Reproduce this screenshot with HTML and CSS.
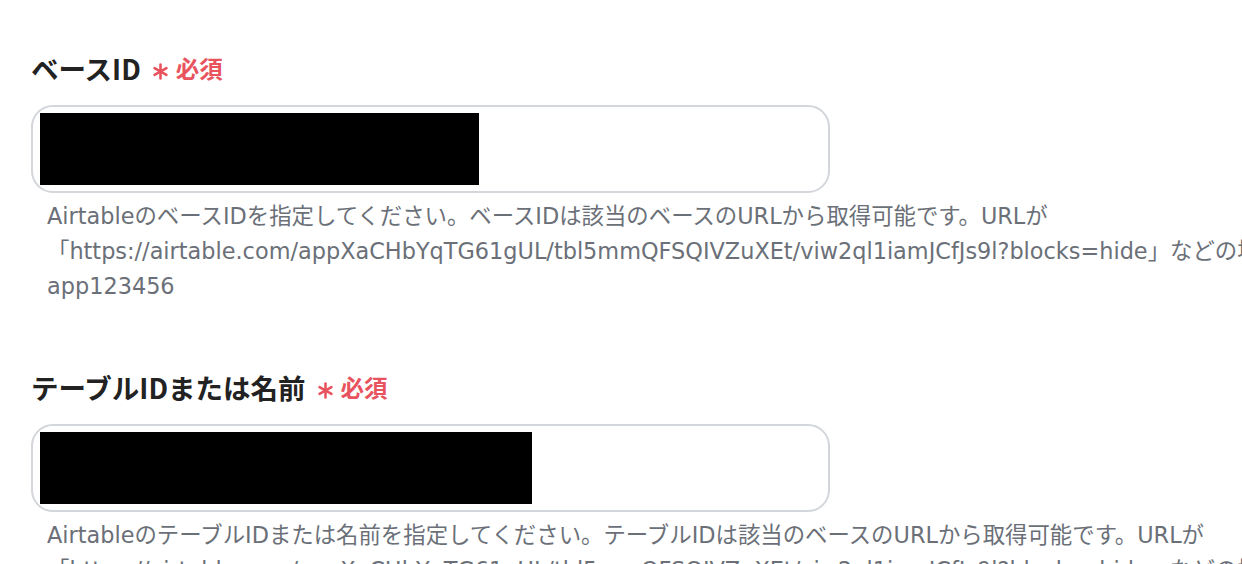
FILE: index.html
```html
<!DOCTYPE html>
<html lang="ja">
<head>
<meta charset="utf-8">
<title>Airtable 設定</title>
<link rel="stylesheet" href="styles.css">
</head>
<body>
<div class="form">
  <section class="field">
    <div class="label">
      <span class="label-text">ベースID</span>
      <svg class="req-mark" viewBox="0 0 16 16" width="17" height="17" aria-hidden="true"><g stroke="currentColor" stroke-width="2.4" stroke-linecap="round"><line x1="8" y1="1.5" x2="8" y2="14.5"/><line x1="2.4" y1="4.75" x2="13.6" y2="11.25"/><line x1="2.4" y1="11.25" x2="13.6" y2="4.75"/></g></svg>
      <span class="req-text">必須</span>
    </div>
    <div class="input"><div class="redact redact-1"></div></div>
    <p class="help">AirtableのベースIDを指定してください。ベースIDは該当のベースのURLから取得可能です。URLが<br>「https://airtable.com/appXaCHbYqTG61gUL/tbl5mmQFSQIVZuXEt/viw2ql1iamJCfJs9l?blocks=hide」などの場合、ベースIDは<br>app123456</p>
  </section>
  <section class="field">
    <div class="label">
      <span class="label-text">テーブルIDまたは名前</span>
      <svg class="req-mark" viewBox="0 0 16 16" width="17" height="17" aria-hidden="true"><g stroke="currentColor" stroke-width="2.4" stroke-linecap="round"><line x1="8" y1="1.5" x2="8" y2="14.5"/><line x1="2.4" y1="4.75" x2="13.6" y2="11.25"/><line x1="2.4" y1="11.25" x2="13.6" y2="4.75"/></g></svg>
      <span class="req-text">必須</span>
    </div>
    <div class="input"><div class="redact redact-2"></div></div>
    <p class="help">AirtableのテーブルIDまたは名前を指定してください。テーブルIDは該当のベースのURLから取得可能です。URLが<br>「https://airtable.com/appXaCHbYqTG61gUL/tbl5mmQFSQIVZuXEt/viw2ql1iamJCfJs9l?blocks=hide」などの場合、テーブルIDは<br>tbl5mmQFSQIVZuXEt</p>
  </section>
</div>
</body>
</html>
```
FILE: styles.css
```css
html, body {
  margin: 0;
  padding: 0;
  background: #ffffff;
  overflow: hidden;
}

body {
  font-family: "DejaVu Sans", "Noto Sans CJK JP", sans-serif;
  color: #222222;
}

.form {
  padding: 49px 0 0 31px;
  display: flex;
  flex-direction: column;
  gap: 64px;
}

.field {
  display: flex;
  flex-direction: column;
}

.label {
  display: flex;
  align-items: center;
  height: 38px;
}

.label-text {
  font-family: "Noto Sans CJK JP", sans-serif;
  font-weight: 700;
  font-size: 27.5px;
  line-height: 38px;
  color: #222222;
}

.req-mark {
  color: #e8535e;
  margin: 6px 7px 0 11px;
}

.req-text {
  font-family: "Noto Sans CJK JP", sans-serif;
  font-weight: 700;
  font-size: 23.5px;
  line-height: 38px;
  color: #e8535e;
}

.input {
  margin-top: 18px;
  width: 799px;
  height: 88px;
  box-sizing: border-box;
  border: 2px solid #d3d6da;
  border-radius: 22px;
  padding: 6px 7px;
  background: #ffffff;
}

.redact {
  height: 72px;
  background: #000000;
}

.redact-1 { width: 439px; }
.redact-2 { width: 492px; }

.help {
  margin: 6px 0 0 16px;
  font-size: 22.4px;
  line-height: 35px;
  color: #6b7078;
  white-space: nowrap;
}
```
